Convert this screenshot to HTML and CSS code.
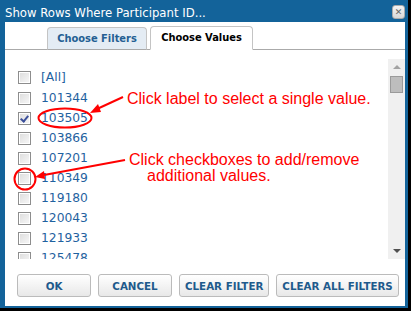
FILE: index.html
```html
<!DOCTYPE html>
<html lang="en">
<head>
    <meta charset="UTF-8">
    <title>Show Rows Where Participant ID</title>
    <link rel="stylesheet" href="styles.css">
</head>
<body>

    <div class="dialog">
        <div class="dialog-header">
            <span class="dialog-title">Show Rows Where Participant ID...</span>
            <span class="close-btn">&#x2715;</span>
        </div>

        <div class="dialog-body">
            <div class="tabs">
                <div class="tab">Choose Filters</div>
                <div class="tab active">Choose Values</div>
            </div>

            <div class="values">
                <div class="value-list">
                    <div class="row all"><span class="check"></span><span class="label">[All]</span></div>
                    <div class="row"><span class="check"></span><span class="label">101344</span></div>
                    <div class="row"><span class="check checked"></span><span class="label">103505</span></div>
                    <div class="row"><span class="check"></span><span class="label">103866</span></div>
                    <div class="row"><span class="check"></span><span class="label">107201</span></div>
                    <div class="row"><span class="check"></span><span class="label">110349</span></div>
                    <div class="row"><span class="check"></span><span class="label">119180</span></div>
                    <div class="row"><span class="check"></span><span class="label">120043</span></div>
                    <div class="row"><span class="check"></span><span class="label">121933</span></div>
                    <div class="row"><span class="check"></span><span class="label">125478</span></div>
                </div>
                <div class="scrollbar">
                    <span class="arrow up"></span>
                    <span class="thumb"></span>
                    <span class="arrow down"></span>
                </div>
            </div>

            <div class="buttons">
                <button class="btn">OK</button>
                <button class="btn">CANCEL</button>
                <button class="btn">CLEAR FILTER</button>
                <button class="btn">CLEAR ALL FILTERS</button>
            </div>
        </div>

        <!-- red callouts drawn over the dialog -->
        <svg class="callouts" width="411" height="311" viewBox="0 0 411 311">
            <ellipse cx="65" cy="118" rx="26.5" ry="9.5" fill="none" stroke="#f00" stroke-width="2"/>
            <line x1="123" y1="97" x2="97" y2="109" stroke="#f00" stroke-width="2"/>
            <polygon points="90,113 98,104 101,112" fill="#f00"/>
            <circle cx="25" cy="179" r="10.5" fill="none" stroke="#f00" stroke-width="2"/>
            <line x1="125" y1="160" x2="44" y2="175" stroke="#f00" stroke-width="2"/>
            <polygon points="35,177 44,171 45,179" fill="#f00"/>
        </svg>
        <div class="note note-label">Click label to select a single value.</div>
        <div class="note note-check">
            <div>Click checkboxes to add/remove</div>
            <div class="indent">additional values.</div>
        </div>
    </div>

</body>
</html>
```

FILE: styles.css
```css
body {
    margin: 0;
    background: #000;
    width: 411px;
    height: 311px;
    overflow: hidden;
}
.dialog {
    position: relative;
    width: 408px;
    height: 308px;
    box-sizing: border-box;
    background: #13639a;
    padding: 0 3px 2px 5px;
    display: flex;
    flex-direction: column;
}
.dialog-header {
    height: 22px;
    display: flex;
    align-items: center;
    justify-content: space-between;
}
.dialog-title {
    color: #fff;
    font-family: 'DejaVu Sans Condensed', 'DejaVu Sans', sans-serif;
    font-size: 13px;
    padding-top: 2px;
}
.close-btn {
    width: 11px;
    height: 12px;
    margin-top: 2px;
    background: linear-gradient(#f4f4f4, #d8d8d8);
    border: 1px solid #aaa;
    border-radius: 3px;
    color: #666;
    font-family: 'DejaVu Sans', sans-serif;
    font-size: 9px;
    font-weight: bold;
    line-height: 12px;
    text-align: center;
}
.dialog-body {
    flex: 1;
    background: #fff;
    display: flex;
    flex-direction: column;
}

/* tabs */
.tabs {
    height: 27px;
    display: flex;
    align-items: flex-end;
    gap: 3px;
    padding-left: 42px;
    border-bottom: 1px solid #aaa;
}
.tab {
    height: 23px;
    width: 100px;
    box-sizing: border-box;
    margin-bottom: -1px;
    border: 1px solid #c4c4c4;
    border-bottom-color: #aaa;
    border-radius: 4px 4px 0 0;
    background: #e4ecf4;
    color: #245f93;
    font-family: 'DejaVu Sans Condensed', 'DejaVu Sans', sans-serif;
    font-size: 11px;
    font-weight: bold;
    line-height: 22px;
    text-align: center;
}
.tab.active {
    height: 24px;
    width: 103px;
    background: #fff;
    color: #000;
    border-bottom-color: #fff;
}

/* value list */
.values {
    display: flex;
    margin-top: 9px;
    height: 200px;
}
.value-list {
    flex: 1;
    overflow: hidden;
    padding-top: 8px;
}
.row {
    height: 20px;
    display: flex;
    align-items: center;
    gap: 10px;
    padding-left: 13px;
}
.row.all {
    margin-bottom: 1px;
}
.label {
    color: #1f62a0;
    font-family: 'DejaVu Sans', Verdana, sans-serif;
    font-size: 12.3px;
}
.check {
    width: 11px;
    height: 11px;
    border: 1px solid #8d8d8d;
    background: linear-gradient(135deg, #dcdcdc, #f8f8f8);
    box-shadow: inset 0 0 0 1px #fff;
    position: relative;
}
.check.checked::after {
    content: '';
    position: absolute;
    left: 3px;
    top: 1px;
    width: 3px;
    height: 6px;
    border: solid #3b4f9a;
    border-width: 0 2px 2px 0;
    transform: rotate(40deg);
}
.scrollbar {
    width: 17px;
    background: #f0f0f0;
    display: flex;
    flex-direction: column;
    align-items: center;
}
.arrow {
    width: 0;
    height: 0;
    border-left: 4px solid transparent;
    border-right: 4px solid transparent;
}
.arrow.up {
    margin-top: 6px;
    border-bottom: 4px solid #a3a3a3;
}
.arrow.down {
    margin-top: auto;
    margin-bottom: 6px;
    border-top: 4px solid #505050;
}
.thumb {
    margin-top: 7px;
    width: 11px;
    height: 15px;
    background: #bdbdbd;
    border: 1px solid #9a9a9a;
}

/* footer buttons */
.buttons {
    display: flex;
    gap: 7px;
    padding: 15px 0 0 12px;
}
.btn {
    height: 23px;
    min-width: 74px;
    padding: 0 5px;
    border: 1px solid #bbb;
    border-radius: 3px;
    background: linear-gradient(#fff, #e8e8e8);
    color: #1e5a8c;
    font-family: 'DejaVu Sans', Verdana, sans-serif;
    font-size: 10.3px;
    font-weight: bold;
}

/* callouts */
.callouts {
    position: absolute;
    top: 0;
    left: 0;
}
.note {
    position: absolute;
    color: #f00;
    font-family: 'Liberation Sans', Arial, sans-serif;
    font-size: 16px;
    line-height: 16px;
}
.note-label {
    left: 127px;
    top: 91px;
}
.note-check {
    left: 129px;
    top: 152px;
}
.note-check .indent {
    padding-left: 18px;
}
```
